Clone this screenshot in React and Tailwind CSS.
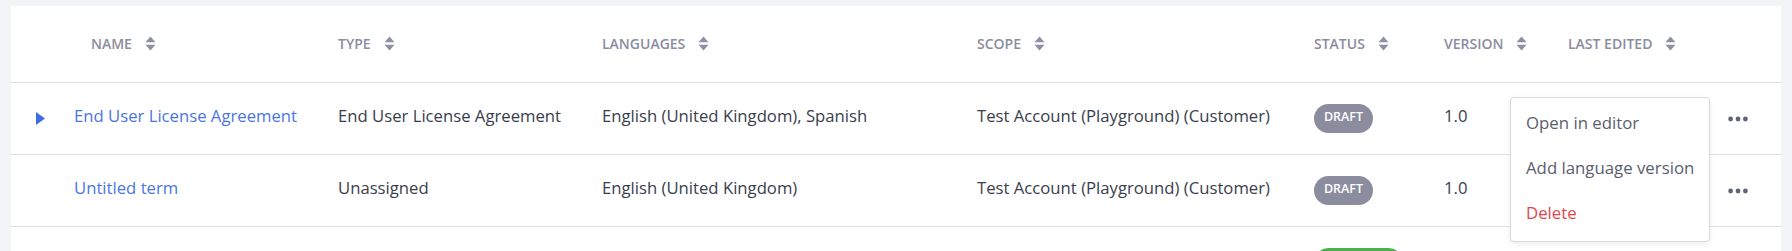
import React from "react";

const FONT = { fontFamily: '"Open Sans", "Noto Sans", sans-serif' };

function SortIcon() {
  return (
    <svg width="11" height="15" viewBox="0 0 11 15" className="ml-[13px] shrink-0">
      <path d="M0.5 6.2 L5.5 0.5 L10.5 6.2 Z" fill="#8e91a3" />
      <path d="M0.5 8.8 L10.5 8.8 L5.5 14.5 Z" fill="#8e91a3" />
    </svg>
  );
}

function Dots() {
  return (
    <svg width="20" height="6" viewBox="0 0 20 6">
      <circle cx="2.6" cy="3" r="2.4" fill="#5f6374" />
      <circle cx="10" cy="3" r="2.4" fill="#5f6374" />
      <circle cx="17.4" cy="3" r="2.4" fill="#5f6374" />
    </svg>
  );
}

function Head({ label, w, pl = "" }) {
  return (
    <div className={`flex items-center pb-[2px] ${w} ${pl}`}>
      <span className="text-[14px] font-semibold uppercase text-[#8a8da0]">{label}</span>
      <SortIcon />
    </div>
  );
}

function Badge({ children, color = "bg-[#8b8d9f]", w = "w-[59px]" }) {
  return (
    <span className={`inline-flex h-[29px] items-center justify-center rounded-full pb-[1px] text-[12.5px] font-semibold text-white ${color} ${w}`}>
      {children}
    </span>
  );
}

function Row({ arrow, name, type, langs, scope, badge, version, dots = true }) {
  return (
    <div className="flex h-[72px] items-center border-b border-[#dedfe4] text-[16.7px] text-[#3a3e4c]">
      <div className="flex w-[63px] items-center pl-[25px] pb-[1px]">
        {arrow && (
          <svg width="9" height="13" viewBox="0 0 9 13">
            <path d="M0 0 L9 6.5 L0 13 Z" fill="#3f6ee0" />
          </svg>
        )}
      </div>
      <div className="w-[264px] pb-[6px] text-[#4a76df]">{name}</div>
      <div className="w-[264px] pb-[6px]">{type}</div>
      <div className="w-[375px] pb-[6px]">{langs}</div>
      <div className="w-[337px] pb-[6px]">{scope}</div>
      <div className="flex w-[130px] items-center pb-[1px]">{badge}</div>
      <div className="w-[124px] pb-[6px]">{version}</div>
      <div className="w-[160px]"></div>
      <div className="flex items-center">{dots && <Dots />}</div>
    </div>
  );
}

export default function App() {
  return (
    <div className="h-[251px] w-[1792px] overflow-hidden bg-[#f3f4f8] pt-[6px] pl-[11px] pr-[11px]" style={FONT}>
      <div className="relative h-[400px] bg-white">
        <div className="flex h-[77px] items-center border-b border-[#dedfe4]">
          <div className="w-[63px]" />
          <Head label="Name" w="w-[264px]" pl="pl-[17px]" />
          <Head label="Type" w="w-[264px]" />
          <Head label="Languages" w="w-[375px]" />
          <Head label="Scope" w="w-[337px]" />
          <Head label="Status" w="w-[130px]" />
          <Head label="Version" w="w-[124px]" />
          <Head label="Last edited" w="w-[160px]" />
        </div>
        <Row
          arrow
          name="End User License Agreement"
          type="End User License Agreement"
          langs="English (United Kingdom), Spanish"
          scope="Test Account (Playground) (Customer)"
          badge={<Badge>DRAFT</Badge>}
          version="1.0"
        />
        <Row
          name="Untitled term"
          type="Unassigned"
          langs="English (United Kingdom)"
          scope="Test Account (Playground) (Customer)"
          badge={<Badge>DRAFT</Badge>}
          version="1.0"
        />
        <Row
          name=""
          type=""
          langs=""
          scope=""
          badge={<Badge color="bg-[#4caf50]" w="w-[89px]" />}
          version=""
          dots={false}
        />

        <div className="absolute left-[1499px] top-[91px] w-[200px] rounded-[4px] border border-[#d8dae2] bg-white py-[4px] shadow-[0_2px_6px_rgba(0,0,0,0.08)]">
          <div className="flex h-[45px] items-center pl-[15px] pb-[3px] text-[16.8px] text-[#5a5e6e]">Open in editor</div>
          <div className="flex h-[45px] items-center pl-[15px] pb-[3px] text-[16.8px] text-[#5a5e6e]">Add language version</div>
          <div className="flex h-[45px] items-center pl-[15px] pb-[3px] text-[16.8px] text-[#e0464b]">Delete</div>
        </div>
      </div>
    </div>
  );
}
